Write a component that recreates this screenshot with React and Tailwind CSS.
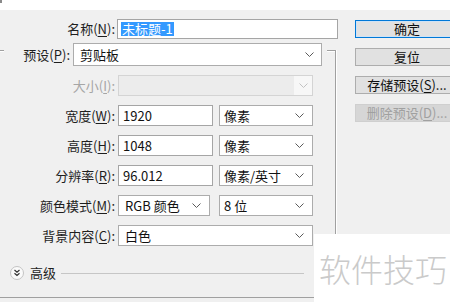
import React from "react";

const Chevron = ({ color = "#5a5a5a" }) => (
  <svg width="9" height="5" viewBox="0 0 9 5" className="shrink-0">
    <path d="M0.5 0.5 L4.5 4.5 L8.5 0.5" fill="none" stroke={color} strokeWidth="1" />
  </svg>
);

const Label = ({ text, m, rest = "):", disabled = false, w = "w-[115px]" }) => (
  <div className={`${w} shrink-0 text-right whitespace-nowrap ${disabled ? "text-[#a6a6a6]" : "text-[#1e1e1e]"}`}>
    {text}(<u className="underline-offset-2">{m}</u>{rest}
  </div>
);

const Select = ({ w, value, pl = "pl-[6px]", pr = "pr-[8px]" }) => (
  <div className={`${w} h-full shrink-0 flex items-center justify-between border border-[#acacac] bg-white ${pl} ${pr}`}>
    <span className="text-[#111] whitespace-nowrap">{value}</span>
    <Chevron />
  </div>
);

const Input = ({ w, value }) => (
  <div className={`${w} h-full shrink-0 flex items-center border border-[#a5a5a5] bg-white pl-[4px]`}>
    <span className="text-[#111]">{value}</span>
  </div>
);

export default function App() {
  return (
    <div className="relative w-[450px] h-[302px] overflow-hidden bg-[#f0f0f0] text-[13px] leading-[16px] font-['Noto_Sans_CJK_SC','Noto_Sans',sans-serif]">
      <div className="h-[10px] bg-white">
        <div className="w-[2px] h-[3px] bg-[#8a8a8a]" />
      </div>
      <div className="flex">
        <div className="w-[340px] shrink-0">
          {/* name row */}
          <div className="mt-[9px] h-[20px] flex items-center">
            <Label text="名称" m="N" />
            <div className="ml-[2px] w-[221px] h-full flex items-center border border-[#a5a5a5] bg-white pl-[3px]">
              <span className="bg-[#3399ff] text-white leading-[14px] px-[1px]">未标题-1</span>
            </div>
          </div>

          {/* group box */}
          <div className="mt-[11px] w-[336px] h-[248px] box-border border-t border-r border-b border-[#a0a0a0] shadow-[inset_0_1px_0_#fff,1px_0_0_#fff]">
            <div className="-mt-[8px] ml-[4px] w-[323px] h-[23px] bg-[#f0f0f0] flex items-center">
              <Label text="预设" m="P" w="w-[66px]" />
              <div className="ml-[3px] w-[249px] h-full flex items-center justify-between border border-[#acacac] bg-white pl-[6px] pr-[7px]">
                <span className="text-[#111]">剪贴板</span>
                <Chevron />
              </div>
            </div>

            <div className="flex flex-col gap-[9px] mt-[9px]">
              <div className="h-[21px] flex items-center">
                <Label text="大小" m="I" disabled />
                <div className="ml-[3px] w-[195px] h-full flex items-center justify-end border border-[#d4d4d4] bg-[#ececec]">
                  <div className="w-[18px] h-full bg-[#f7f7f7] flex items-center justify-center">
                    <Chevron color="#c2c2c2" />
                  </div>
                </div>
              </div>

              <div className="h-[21px] flex items-center">
                <Label text="宽度" m="W" />
                <div className="ml-[3px] h-full flex gap-[6px]">
                  <Input w="w-[95px]" value="1920" />
                  <Select w="w-[94px]" value="像素" pl="pl-[4px]" />
                </div>
              </div>

              <div className="h-[21px] flex items-center">
                <Label text="高度" m="H" />
                <div className="ml-[3px] h-full flex gap-[6px]">
                  <Input w="w-[95px]" value="1048" />
                  <Select w="w-[94px]" value="像素" pl="pl-[4px]" />
                </div>
              </div>

              <div className="h-[21px] flex items-center">
                <Label text="分辨率" m="R" />
                <div className="ml-[3px] h-full flex gap-[6px]">
                  <Input w="w-[95px]" value="96.012" />
                  <Select w="w-[94px]" value="像素/英寸" pl="pl-[4px]" />
                </div>
              </div>

              <div className="h-[21px] flex items-center">
                <Label text="颜色模式" m="M" />
                <div className="ml-[3px] h-full flex gap-[9px]">
                  <Select w="w-[92px]" value="RGB 颜色" />
                  <Select w="w-[94px]" value="8 位" pl="pl-[4px]" />
                </div>
              </div>

              <div className="h-[21px] flex items-center">
                <Label text="背景内容" m="C" />
                <div className="ml-[3px] h-full flex">
                  <Select w="w-[195px]" value="白色" />
                </div>
              </div>
            </div>

            {/* advanced */}
            <div className="mt-[19px] h-[16px] flex items-center">
              <div className="ml-[9px] w-[16px] h-[16px] shrink-0">
                <svg width="16" height="16" viewBox="0 0 16 16">
                  <circle cx="8" cy="8" r="6.5" fill="#fafafa" stroke="#c4c4c4" />
                  <path d="M5.5 5 L8 7.2 L10.5 5 M5.5 8.3 L8 10.5 L10.5 8.3" fill="none" stroke="#333" strokeWidth="1.2" />
                </svg>
              </div>
              <span className="ml-[5px] text-[#1e1e1e]">高级</span>
              <div className="ml-[5px] w-[243px] h-px bg-[#c6c6c6]" />
            </div>
          </div>
        </div>

        {/* buttons */}
        <div className="ml-[15px] mt-[10px] flex flex-col gap-[10px]">
          <div className="w-[104px] h-[18px] shrink-0 flex items-center justify-center bg-[#e1e1e1] border border-[#0078d7] shadow-[inset_0_0_0_1px_#cfe3f6] text-[#111]">确定</div>
          <div className="w-[104px] h-[18px] shrink-0 flex items-center justify-center bg-[#e1e1e1] border border-[#adadad] text-[#111]">复位</div>
          <div className="w-[104px] h-[18px] shrink-0 flex items-center justify-center bg-[#e1e1e1] border border-[#adadad] text-[#111] whitespace-nowrap">
            存储预设(<u className="underline-offset-2">S</u>)...
          </div>
          <div className="w-[104px] h-[18px] shrink-0 flex items-center justify-center bg-[#d6d6d6] border border-[#cfcfcf] text-[#a0a0a0] whitespace-nowrap">
            删除预设(<u className="underline-offset-2">D</u>)...
          </div>
        </div>
      </div>

      {/* watermark */}
      <div className="absolute left-[314px] top-[234px] w-[136px] h-[68px] bg-white flex items-center pl-[5px]">
        <span className="text-[32px] leading-[36px] font-light text-[#cacaca] whitespace-nowrap">软件技巧</span>
      </div>
    </div>
  );
}
